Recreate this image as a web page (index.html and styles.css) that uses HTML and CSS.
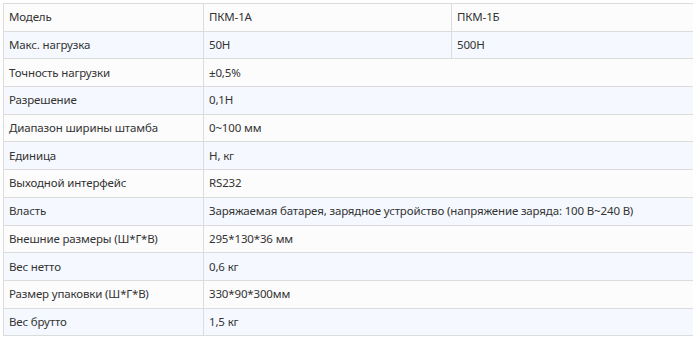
FILE: index.html
```html
<!DOCTYPE html>
<html lang="ru">
<head>
<meta charset="utf-8">
<link rel="stylesheet" href="styles.css">
</head>
<body>
<table class="spec">
  <colgroup><col class="c1"><col class="c2"><col class="c3"></colgroup>
  <tbody>
    <tr><td>Модель</td><td>ПКМ-1А</td><td>ПКМ-1Б</td></tr>
    <tr><td>Макс. нагрузка</td><td>50Н</td><td>500Н</td></tr>
    <tr><td>Точность нагрузки</td><td colspan="2">±0,5%</td></tr>
    <tr><td>Разрешение</td><td colspan="2">0,1Н</td></tr>
    <tr><td>Диапазон ширины штамба</td><td colspan="2">0~100 мм</td></tr>
    <tr><td>Единица</td><td colspan="2">Н, кг</td></tr>
    <tr><td>Выходной интерфейс</td><td colspan="2">RS232</td></tr>
    <tr><td>Власть</td><td colspan="2">Заряжаемая батарея, зарядное устройство (напряжение заряда: 100 В~240 В)</td></tr>
    <tr><td>Внешние размеры (Ш*Г*В)</td><td colspan="2">295*130*36 мм</td></tr>
    <tr><td>Вес нетто</td><td colspan="2">0,6 кг</td></tr>
    <tr><td>Размер упаковки (Ш*Г*В)</td><td colspan="2">330*90*300мм</td></tr>
    <tr><td>Вес брутто</td><td colspan="2">1,5 кг</td></tr>
  </tbody>
</table>
</body>
</html>
```

FILE: styles.css
```css
html, body {
  margin: 0;
  padding: 0;
  background: #ffffff;
  overflow: hidden;
}
body {
  padding: 3px 0 0 3px;
  font-family: "Noto Sans", "Open Sans", sans-serif;
  font-size: 11.5px;
  letter-spacing: -0.15px;
  color: #333333;
}
.spec {
  border-collapse: collapse;
  table-layout: fixed;
  width: 720px;
}
.c1 { width: 200px; }
.c2 { width: 248px; }
.c3 { width: 272px; }
.spec td {
  border: 1px solid #dcdcdc;
  height: 27.7px;
  padding: 0 5px;
  box-sizing: border-box;
  vertical-align: middle;
  white-space: nowrap;
  line-height: 16px;
}
.spec tr:nth-child(odd) td { background: #fcfcfc; }
.spec tr:nth-child(even) td { background: #f5f9ff; }
```
